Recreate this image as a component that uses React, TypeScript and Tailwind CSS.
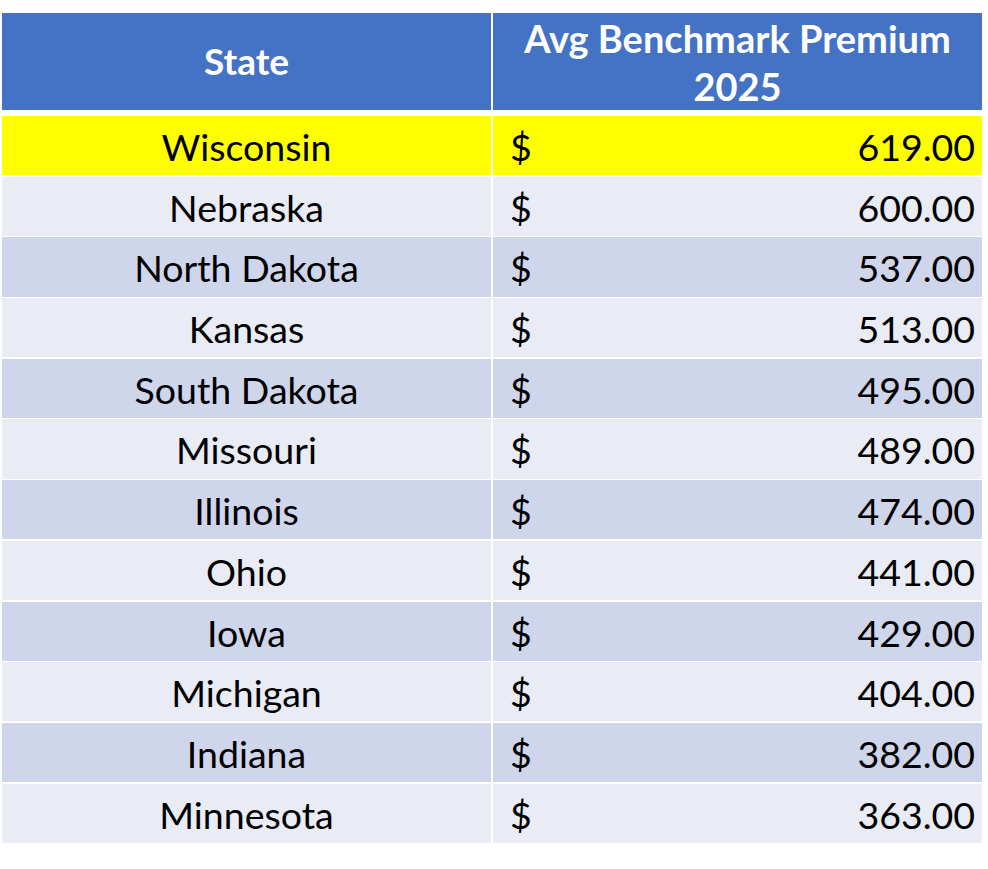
const rows: [string, string][] = [
  ["Wisconsin", "619.00"],
  ["Nebraska", "600.00"],
  ["North Dakota", "537.00"],
  ["Kansas", "513.00"],
  ["South Dakota", "495.00"],
  ["Missouri", "489.00"],
  ["Illinois", "474.00"],
  ["Ohio", "441.00"],
  ["Iowa", "429.00"],
  ["Michigan", "404.00"],
  ["Indiana", "382.00"],
  ["Minnesota", "363.00"],
];

export default function App() {
  return (
    <div className="w-[988px] h-[869px] bg-white pt-[13px] pl-[2px] font-['Lato',sans-serif] text-black">
      <div className="w-[980px] flex flex-col">
        {/* header */}
        <div className="grid grid-cols-[489px_489px] gap-x-[2px] h-[97px]">
          <div className="bg-[#4472c4] flex items-center justify-center text-white font-bold text-[37px] pb-[2px]">
            State
          </div>
          <div className="bg-[#4472c4] flex flex-col items-center justify-center text-white font-bold text-[38px] leading-[48px]">
            <span>Avg Benchmark Premium</span>
            <span>2025</span>
          </div>
        </div>

        <div className="flex flex-col gap-y-[2px] mt-[6px]">
          {rows.map(([state, amount], i) => {
            const bg =
              i === 0 ? "bg-[#ffff00]" : i % 2 === 1 ? "bg-[#e9ebf5]" : "bg-[#cfd5ea]";
            return (
              <div key={state} className="grid grid-cols-[489px_489px] gap-x-[2px] h-[58.7px] text-[37.5px]">
                <div className={`${bg} flex items-center justify-center pt-[3px]`}>{state}</div>
                <div className={`${bg} flex items-center justify-between pl-[17px] pr-[7px] pt-[3px]`}>
                  <span>$</span>
                  <span>{amount}</span>
                </div>
              </div>
            );
          })}
        </div>
      </div>
    </div>
  );
}
